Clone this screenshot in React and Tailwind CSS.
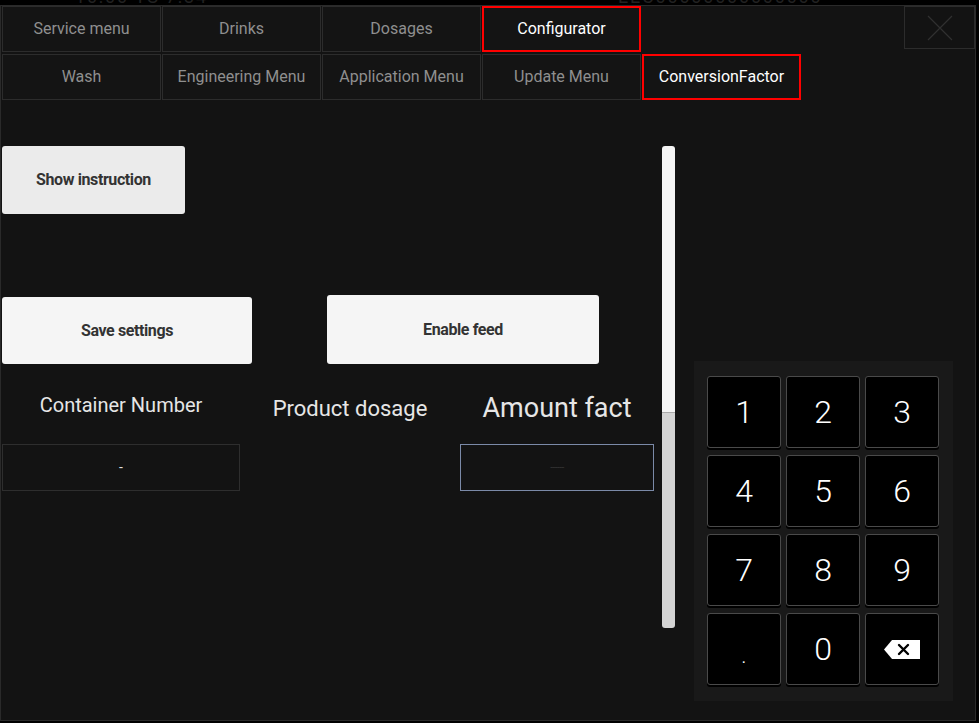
const topTabs = ['Service menu', 'Drinks', 'Dosages', 'Configurator']
const subTabs = ['Wash', 'Engineering Menu', 'Application Menu', 'Update Menu', 'ConversionFactor']
const keys = ['1', '2', '3', '4', '5', '6', '7', '8', '9', '.', '0', 'back']

function Tab({ label, active }) {
  return (
    <div
      className={
        'w-[159px] h-full flex items-center justify-center text-[16px] bg-[#141414] ' +
        (active ? 'border-2 border-[#ff0000] text-white' : 'border border-[#2c2c2c] text-[#8f8f8f]')
      }
    >
      {label}
    </div>
  )
}

function Backspace() {
  return (
    <svg width="36" height="19" viewBox="0 0 36 19">
      <path d="M8 0 H36 V19 H8 L0 9.5 Z" fill="#fff" />
      <path d="M15 5 L24 14 M24 5 L15 14" stroke="#000" strokeWidth="2.4" strokeLinecap="round" />
    </svg>
  )
}

export default function App() {
  return (
    <div className="w-[979px] h-[723px] bg-black overflow-hidden" style={{ fontFamily: 'Roboto, "Noto Sans", sans-serif' }}>
      {/* faint text behind the dialog, mostly hidden */}
      <div className="h-[5px] overflow-hidden relative">
        <div className="absolute left-[75px] top-[-12px] text-[18px] leading-[18px] text-[#222] tracking-widest">10:00 TS 7:34</div>
        <div className="absolute left-[618px] top-[-12px] text-[18px] leading-[18px] text-[#222] tracking-widest">EEC00000000000000</div>
      </div>

      <div className="w-[976px] h-[716px] bg-[#131313] border border-[#2a2a2a] flex flex-col">
        {/* first tab row */}
        <div className="flex h-[46px] gap-px pl-px">
          {topTabs.map(t => (
            <Tab key={t} label={t} active={t === 'Configurator'} />
          ))}
          <div className="flex-1" />
          <div className="w-[71px] h-[43px] border border-[#2c2c2c] flex items-center justify-center">
            <svg width="28" height="28" viewBox="0 0 28 28">
              <path d="M2 2 L26 26 M26 2 L2 26" stroke="#303030" strokeWidth="1.2" />
            </svg>
          </div>
        </div>

        {/* second tab row */}
        <div className="flex h-[46px] gap-px pl-px mt-[2px]">
          {subTabs.map(t => (
            <Tab key={t} label={t} active={t === 'ConversionFactor'} />
          ))}
        </div>

        {/* content */}
        <div className="flex pt-[46px] pl-px">
          <div className="w-[660px] flex flex-col">
            <button className="w-[183px] h-[68px] bg-[#ebebeb] rounded-[3px] text-[#333] text-[16px] font-bold tracking-tight">
              Show instruction
            </button>

            <div className="flex items-end mt-[81px]">
              <button className="w-[250px] h-[67px] bg-[#f5f5f5] rounded-[3px] text-[#333] text-[16px] font-bold tracking-tight">
                Save settings
              </button>
              <button className="w-[272px] h-[69px] ml-[75px] bg-[#f5f5f5] rounded-[3px] text-[#333] text-[16px] font-bold tracking-tight">
                Enable feed
              </button>
            </div>

            <div className="grid grid-cols-[238px_220px_194px] items-center h-[80px] pt-[8px] text-[#e6e6e6]">
              <div className="text-center text-[20px] -mt-[6px]">Container Number</div>
              <div className="text-center text-[22px]">Product dosage</div>
              <div className="text-center text-[27px]">Amount fact</div>
            </div>

            <div className="grid grid-cols-[238px_220px_194px] h-[47px]">
              <div className="border border-[#2e2e2e] flex items-center justify-center text-[#ddd] text-[14px]">-</div>
              <div />
              <div className="border border-[#7b8aa8] flex items-center justify-center text-[#333] text-[10px] tracking-tighter">------</div>
            </div>
          </div>

          {/* scrollbar */}
          <div className="w-[13px] h-[482px] flex flex-col rounded-[3px] overflow-hidden">
            <div className="h-[266px] bg-[#f5f5f5]" />
            <div className="flex-1 bg-[#d4d4d4] border-t border-[#aaa]" />
          </div>

          {/* numpad */}
          <div className="ml-[19px] mt-[215px] w-[259px] h-[340px] bg-[#191919] pt-[15px] pl-[13px]">
            <div className="grid grid-cols-[74px_74px_74px] gap-x-[5px] gap-y-[7px]">
              {keys.map(k => (
                <div
                  key={k}
                  className="h-[72px] bg-black border border-[#4a4a4a] rounded-[3px] flex items-center justify-center text-white text-[32px] font-light shadow-[0_2px_0_#000]"
                >
                  {k === 'back' ? <Backspace /> : k === '.' ? <span className="mt-[12px] text-[22px]">.</span> : k}
                </div>
              ))}
            </div>
          </div>
        </div>
      </div>
    </div>
  )
}
